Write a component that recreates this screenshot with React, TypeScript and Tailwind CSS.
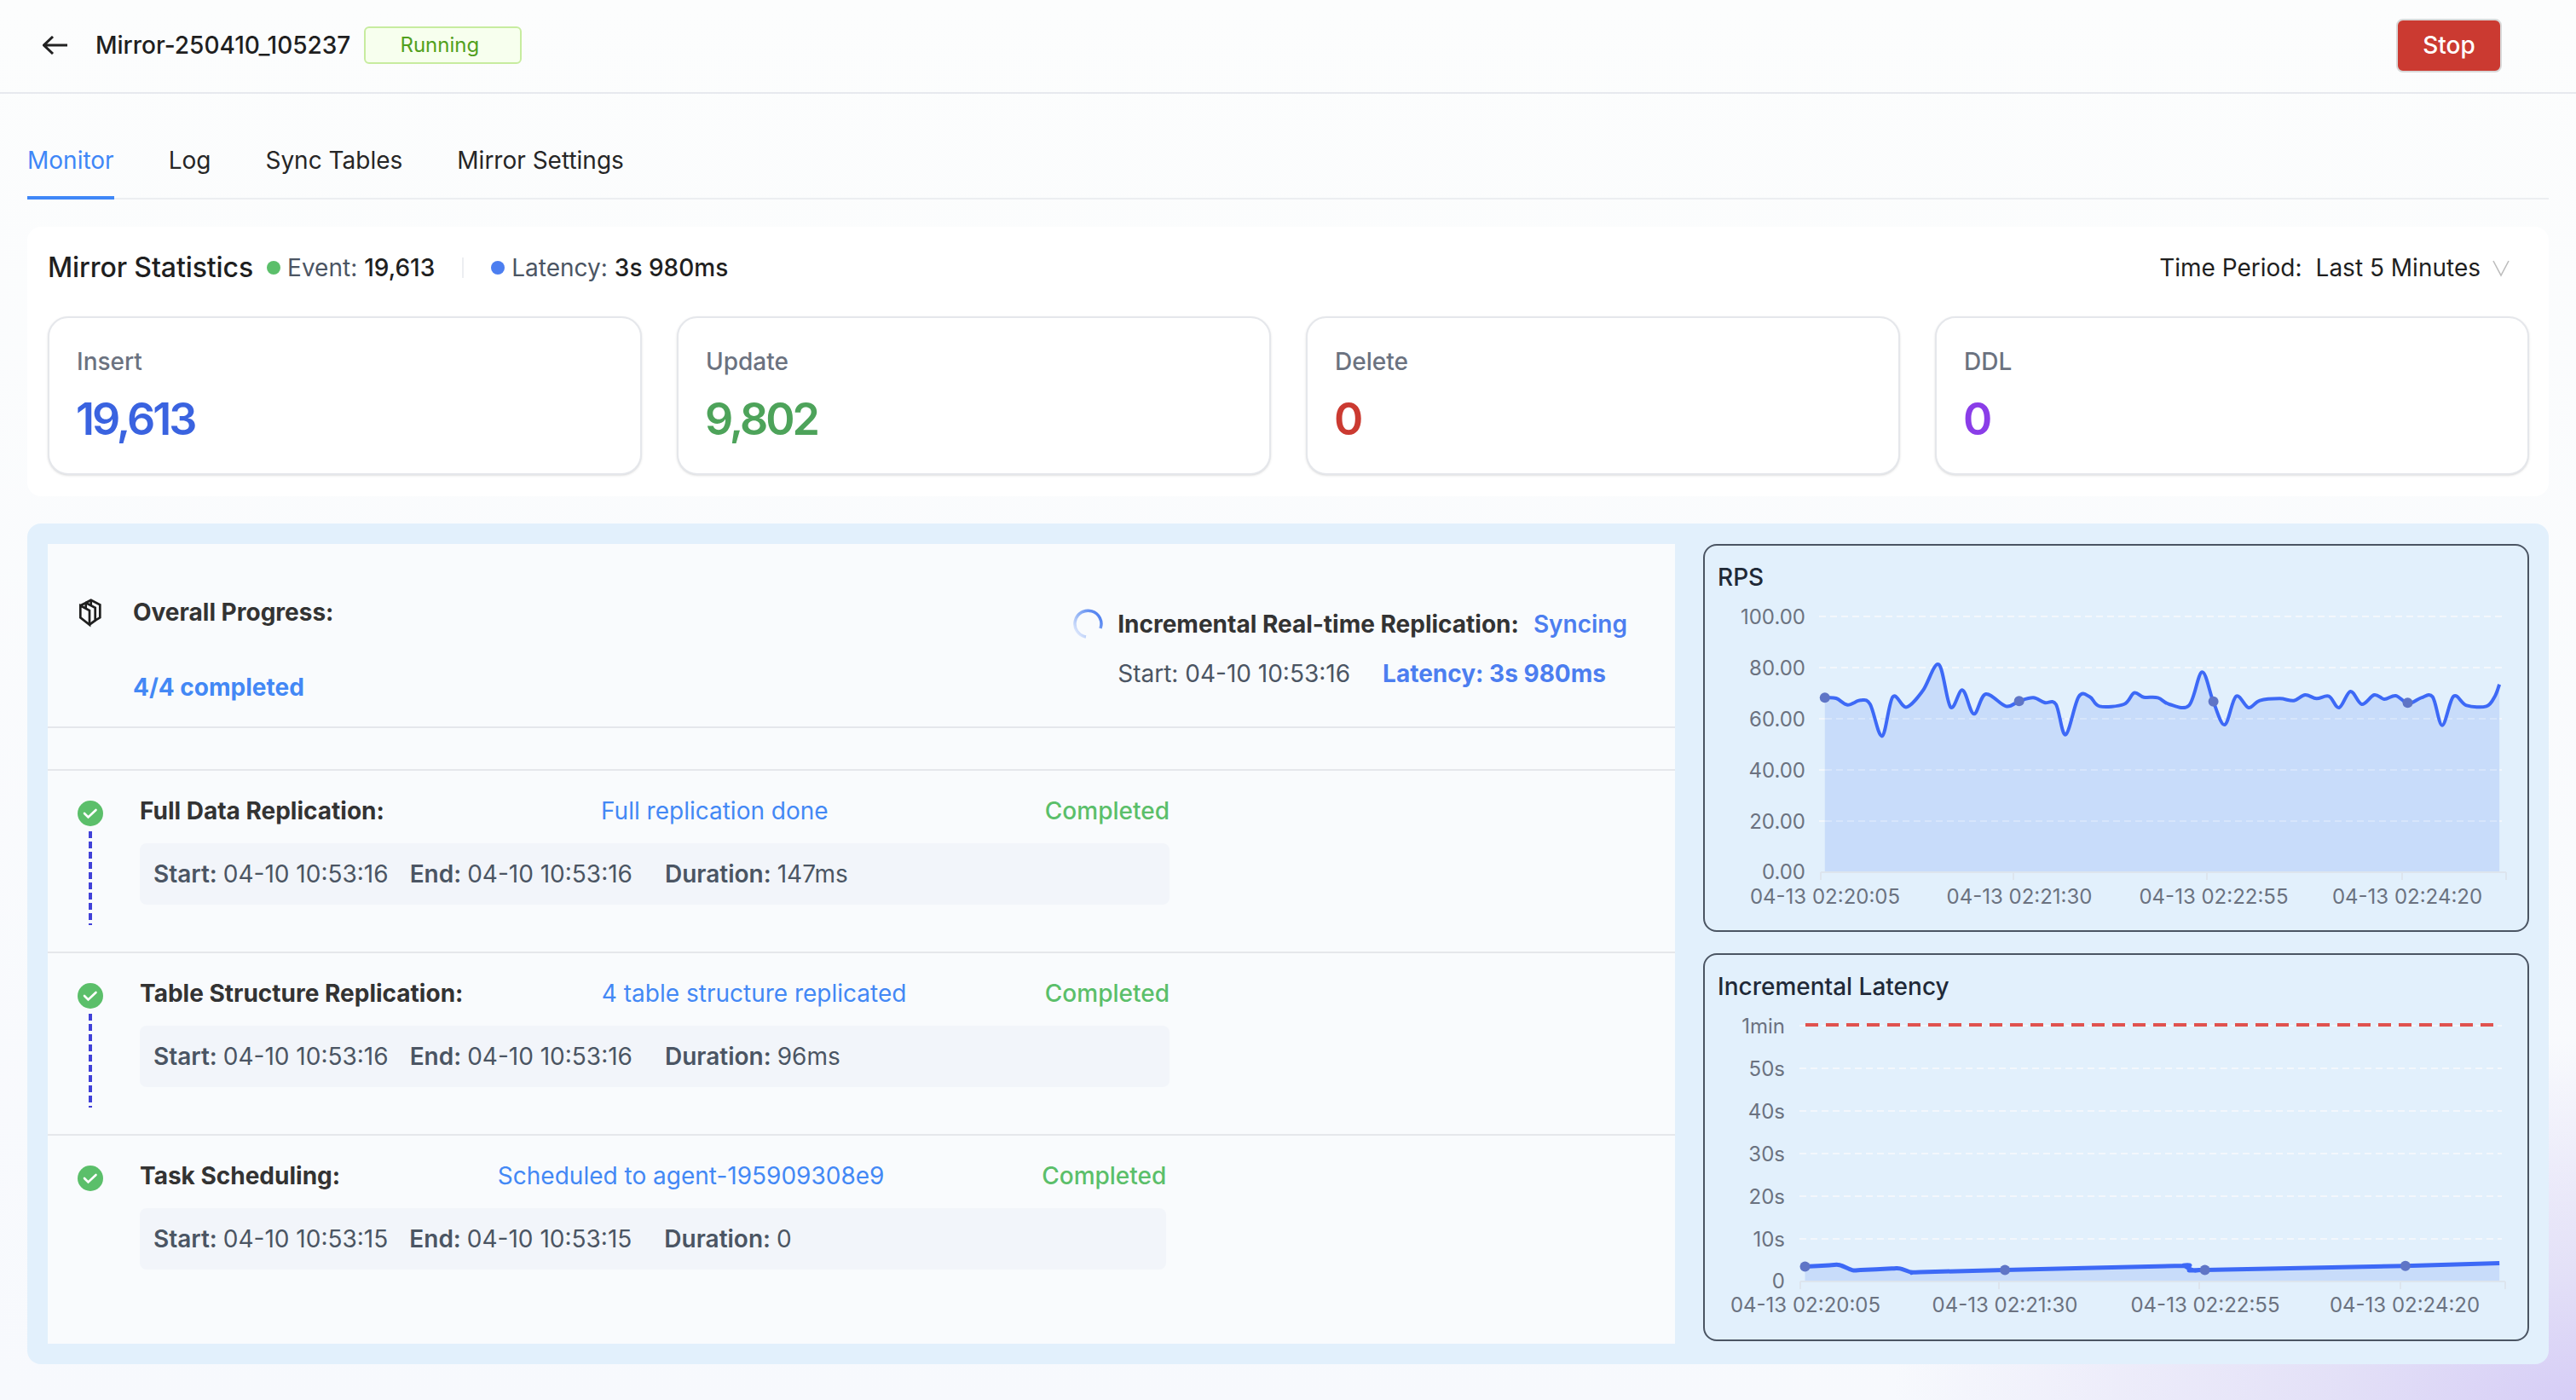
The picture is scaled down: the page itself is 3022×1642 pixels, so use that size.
import React from "react";

const toX = (zx: number) => 1980 + zx / 1.505;

// Catmull-Rom through the sampled points, so the trace stays smooth
const smooth = (pts: number[][]) => {
  let d = `M${pts[0][0]} ${pts[0][1]}`;
  for (let i = 0; i < pts.length - 1; i++) {
    const p0 = pts[Math.max(i - 1, 0)];
    const p1 = pts[i];
    const p2 = pts[i + 1];
    const p3 = pts[Math.min(i + 2, pts.length - 1)];
    const c1x = p1[0] + (p2[0] - p0[0]) / 6;
    const c1y = p1[1] + (p2[1] - p0[1]) / 6;
    const c2x = p2[0] - (p3[0] - p1[0]) / 6;
    const c2y = p2[1] - (p3[1] - p1[1]) / 6;
    d += ` C${c1x} ${c1y} ${c2x} ${c2y} ${p2[0]} ${p2[1]}`;
  }
  return d;
};

const rpsRaw = [
  [242, 595], [262, 597], [282, 620], [305, 604], [322, 618], [343, 730], [362, 592], [386, 628], [415, 570],
  [443, 478], [464, 628], [485, 568], [505, 652], [526, 582], [562, 625], [585, 607], [610, 595], [630, 612],
  [650, 618], [667, 725], [690, 592], [710, 592], [727, 625], [770, 618], [788, 578], [805, 593], [830, 595],
  [850, 618], [885, 622], [908, 505], [928, 610], [948, 690], [968, 590], [990, 630], [1010, 605], [1045, 598],
  [1070, 605], [1090, 585], [1110, 598], [1132, 590], [1150, 630], [1170, 573], [1190, 618], [1212, 585],
  [1230, 600], [1250, 588], [1272, 615], [1295, 595], [1315, 592], [1332, 692], [1352, 590], [1375, 622],
  [1410, 625], [1425, 590], [1433, 548],
];
const rpsPts = rpsRaw.map(([x, y]) => [toX(x), 620 + y / 3]);
const rpsDots = [[242, 595], [585, 607], [928, 608], [1271, 613]].map(([x, y]) => [toX(x), 620 + y / 3]);

const latRaw = [
  [207, 1115], [250, 1111], [268, 1110], [290, 1127], [305, 1127], [360, 1122], [375, 1122], [395, 1135], [410, 1134],
  [560, 1127], [860, 1113], [875, 1112], [892, 1128], [905, 1127], [913, 1127], [1266, 1113], [1433, 1104],
];
const latPts = latRaw.map(([x, y]) => [toX(x), 1100 + y / 2.893]);
const latDots = [[207, 1115], [560, 1127], [913, 1127], [1267, 1113]].map(([x, y]) => [toX(x), 1100 + y / 2.893]);

const axisText = "font-['Inter'] text-[24px] fill-[#6b7280]";

const RpsChart = () => {
  const line = smooth(rpsPts);
  const ys = [
    ["100.00", 723],
    ["80.00", 783],
    ["60.00", 843],
    ["40.00", 903],
    ["20.00", 963],
    ["0.00", 1022],
  ] as const;
  return (
    <svg viewBox="2000 697 965 394" className="block w-[965px] h-[394px]">
      {ys.slice(0, 5).map(([, y]) => (
        <line key={y} x1="2134" x2="2935" y1={y} y2={y} stroke="#f3f7fc" strokeWidth="2" strokeDasharray="8 5" />
      ))}
      <path d={`${line} L${toX(1433)} 1022 L${toX(242)} 1022 Z`} fill="#c8dcfa" />
      {ys.slice(2, 5).map(([, y]) => (
        <line key={y} x1="2141" x2="2932" y1={y} y2={y} stroke="#d7e5fb" strokeWidth="2" strokeDasharray="8 5" />
      ))}
      <line x1="2136" x2="2940" y1="1023" y2="1023" stroke="#dde5ee" strokeWidth="2" />
      {[2136, 2362, 2589, 2818, 2940].map((x) => (
        <line key={x} x1={x} x2={x} y1="1023" y2="1032" stroke="#dde5ee" strokeWidth="2" />
      ))}
      <path d={line} fill="none" stroke="#3d69f6" strokeWidth="4" />
      {rpsDots.map(([x, y]) => (
        <circle key={x} cx={x} cy={y} r="6" fill="#5f75c6" />
      ))}
      {ys.map(([t, y]) => (
        <text key={t} x="2118" y={y + 9} textAnchor="end" className={axisText}>
          {t}
        </text>
      ))}
      {[
        ["04-13 02:20:05", 2141],
        ["04-13 02:21:30", 2369],
        ["04-13 02:22:55", 2597],
        ["04-13 02:24:20", 2824],
      ].map(([t, x]) => (
        <text key={t} x={x} y="1060" textAnchor="middle" className={axisText}>
          {t}
        </text>
      ))}
    </svg>
  );
};

const LatencyChart = () => {
  const line = smooth(latPts);
  const ys = [
    ["1min", 1203],
    ["50s", 1253],
    ["40s", 1303],
    ["30s", 1353],
    ["20s", 1403],
    ["10s", 1453],
    ["0", 1502],
  ] as const;
  return (
    <svg viewBox="2000 1177 965 394" className="block w-[965px] h-[394px]">
      {ys.slice(0, 6).map(([, y]) => (
        <line key={y} x1="2111" x2="2935" y1={y} y2={y} stroke="#f3f7fc" strokeWidth="2" strokeDasharray="8 5" />
      ))}
      <line x1="2118" x2="2927" y1="1202" y2="1202" stroke="#e0524f" strokeWidth="4" strokeDasharray="15 9" />
      <path d={`${line} L${toX(1433)} 1502 L${toX(207)} 1502 Z`} fill="#c8dcfa" />
      <line x1="2112" x2="2939" y1="1503" y2="1503" stroke="#dde5ee" strokeWidth="2" />
      {[2112, 2345, 2580, 2816, 2939].map((x) => (
        <line key={x} x1={x} x2={x} y1="1503" y2="1512" stroke="#dde5ee" strokeWidth="2" />
      ))}
      <path d={line} fill="none" stroke="#3d69f6" strokeWidth="5" />
      {latDots.map(([x, y]) => (
        <circle key={x} cx={x} cy={y} r="6" fill="#5f75c6" />
      ))}
      {ys.map(([t, y]) => (
        <text key={t} x="2094" y={y + 9} textAnchor="end" className={axisText}>
          {t}
        </text>
      ))}
      {[
        ["04-13 02:20:05", 2118],
        ["04-13 02:21:30", 2352],
        ["04-13 02:22:55", 2587],
        ["04-13 02:24:20", 2821],
      ].map(([t, x]) => (
        <text key={t} x={x} y="1539" textAnchor="middle" className={axisText}>
          {t}
        </text>
      ))}
    </svg>
  );
};

const ChartCard = ({ title, children }: { title: string; children: React.ReactNode }) => (
  <div className="h-[455px] w-[969px] rounded-[16px] border-2 border-[#4b5563] pt-[17px]">
    <div className="pl-[15px] text-[28px] leading-[40px] font-medium text-[#1f2937]">{title}</div>
    {children}
  </div>
);

const StatCard = ({ label, value, color }: { label: string; value: string; color: string }) => (
  <div className="h-[186px] flex-1 rounded-[24px] border-2 border-[#e5e7eb] bg-white pl-[32px] pt-[31px] shadow-sm">
    <div className="text-[28px] leading-[40px] font-medium text-[#6b7280]">{label}</div>
    <div className={`mt-[18px] text-[52px] leading-[60px] font-semibold tracking-[-3px] ${color} ${value.length > 1 ? "ml-[-1px]" : "ml-[-1px]"}`}>
      {value}
    </div>
  </div>
);

const CheckDot = () => (
  <svg viewBox="0 0 30 30" className="w-[30px] h-[30px] shrink-0">
    <circle cx="15" cy="15" r="15" fill="#5bbf6a" />
    <path d="M8 15 L12.5 19.5 L21.5 11" fill="none" stroke="#fff" strokeWidth="2.6" strokeLinecap="round" />
  </svg>
);

type Step = {
  name: string;
  note: string;
  start: string;
  end: string;
  duration: string;
  line: boolean;
  last?: boolean;
};

const steps: Step[] = [
  { name: "Full Data Replication:", note: "Full replication done", start: "04-10 10:53:16", end: "04-10 10:53:16", duration: "147ms", line: true },
  { name: "Table Structure Replication:", note: "4 table structure replicated", start: "04-10 10:53:16", end: "04-10 10:53:16", duration: "96ms", line: true },
  { name: "Task Scheduling:", note: "Scheduled to agent-195909308e9", start: "04-10 10:53:15", end: "04-10 10:53:15", duration: "0", line: false, last: true },
];

const StepRow = ({ step }: { step: Step }) => (
  <div className={step.last ? "flex h-[245px] pl-[35px]" : "flex h-[214px] border-b-2 border-[#e5e7eb] pl-[35px]"}>
    <div className="flex w-[30px] flex-col items-center pt-[35px]">
      <CheckDot />
      {step.line && (
        <div className="mt-[6px] h-[110px] w-[4px] bg-[repeating-linear-gradient(to_bottom,#4141d8_0,#4141d8_8px,transparent_8px,transparent_12px)]" />
      )}
    </div>
    <div className="ml-[43px] w-fit pt-[27px]">
      <div className="flex justify-between text-[28px] leading-[40px]">
        <span className="font-bold text-[#333]">{step.name}</span>
        <span className="text-[#4388f5]">{step.note}</span>
        <span className="font-medium text-[#5bbf6a]">Completed</span>
      </div>
      <div className="mt-[18px] flex h-[72px] items-center rounded-[8px] bg-[#f2f5fa] pl-[16px] text-[28px] text-[#4b5563]">
        <span className="mr-[25px]">
          <span className="font-semibold">Start: </span>
          {step.start}
        </span>
        <span className="mr-[38px]">
          <span className="font-semibold">End: </span>
          {step.end}
        </span>
        <span className={step.last ? "w-[589px]" : "w-[592px]"}>
          <span className="font-semibold">Duration: </span>
          {step.duration}
        </span>
      </div>
    </div>
  </div>
);

export default function App() {
  return (
    <div className="min-h-screen w-full bg-[radial-gradient(800px_420px_at_100%_100%,#d6cdf6_0%,#e3e0f7_35%,transparent_100%),linear-gradient(to_bottom,#fcfdfd,#f7f9fd)] bg-no-repeat font-['Inter',sans-serif] pb-[42px]">
      <header className="flex h-[110px] items-center border-b-2 border-[#e7e9ee] pb-[2px] pl-[50px] pr-[87px]">
        <svg viewBox="0 0 30 22" className="h-[22px] w-[30px]">
          <path d="M29 11 H2 M12 1 L1.5 11 L12 21" fill="none" stroke="#222" strokeWidth="3" />
        </svg>
        <span className="ml-[32px] text-[28px] font-medium text-[#1f1f1f]">Mirror-250410_105237</span>
        <span className="ml-[16px] flex h-[44px] w-[185px] items-center justify-center rounded-[6px] border-2 border-[#c7ec9f] bg-[#f7ffee] pr-[8px] text-[24px] text-[#52a01e]">
          Running
        </span>
        <button className="ml-auto h-[63px] w-[124px] rounded-[8px] border-2 border-[#d9d9d9] bg-[#cb3a31] text-[28px] font-medium text-white">
          Stop
        </button>
      </header>

      <div className="mx-[32px] mt-[44px] flex h-[80px] gap-[64px] border-b-2 border-[#eceef1] text-[28px] leading-[68px] text-[#262626]">
        <span className="h-[80px] border-b-4 border-[#3f87f7] text-[#3f87f7]">Monitor</span>
        <span>Log</span>
        <span>Sync Tables</span>
        <span>Mirror Settings</span>
      </div>

      <section className="mx-[32px] mt-[32px] h-[316px] rounded-[16px] bg-white pl-[24px] pr-[23px] pt-[28px]">
        <div className="flex h-[40px] items-center text-[28px]">
          <span className="text-[32px] font-medium tracking-[-0.1px] text-[#1f1f1f]">Mirror Statistics</span>
          <span className="ml-[16px] h-[16px] w-[16px] rounded-full bg-[#5bbf6a]" />
          <span className="ml-[8px] text-[#4b5563]">Event: </span>
          <span className="ml-[8px] font-medium text-[#1f1f1f]">19,613</span>
          <span className="ml-[32px] h-[24px] w-[2px] bg-[#eceef1]" />
          <span className="ml-[32px] h-[16px] w-[16px] rounded-full bg-[#4c7ef0]" />
          <span className="ml-[8px] text-[#4b5563]">Latency: </span>
          <span className="ml-[8px] font-medium text-[#1f1f1f]">3s 980ms</span>
          <span className="ml-auto text-[#1f1f1f]">Time Period:</span>
          <span className="ml-[16px] text-[#1f1f1f]">Last 5 Minutes</span>
          <svg viewBox="0 0 20 24" className="ml-[14px] mr-[23px] h-[24px] w-[20px]">
            <path d="M1 4 L10 21 L19 4" fill="none" stroke="#bdbdbd" strokeWidth="1.6" />
          </svg>
        </div>
        <div className="mt-[37px] flex gap-[41px]">
          <StatCard label="Insert" value="19,613" color="text-[#3a63e0]" />
          <StatCard label="Update" value="9,802" color="text-[#4da35a]" />
          <StatCard label="Delete" value="0" color="text-[#cb3a31]" />
          <StatCard label="DDL" value="0" color="text-[#8a3de8]" />
        </div>
      </section>

      <section className="mx-[32px] mt-[32px] flex h-[986px] gap-[33px] rounded-[16px] bg-[#e2f0fc] pl-[24px] pt-[24px]">
        <div className="h-[938px] w-[1909px] bg-[#f9fbfd]">
          <div className="flex h-[216px] border-b-2 border-[#e5e7eb]">
            <div className="flex flex-col pl-[32px]">
              <div className="mt-[59px] flex h-[42px] items-center">
                <svg viewBox="0 0 36 42" className="h-[42px] w-[36px]">
                  <g fill="none" stroke="#1f1f1f" strokeWidth="2.7">
                    <path d="M6.3 13.3 L17 19 V35.7 L6.3 27.3 Z" />
                    <path d="M6.3 13.3 L12.7 10 L23.7 15.7 V30.7 L17 35.7" />
                    <path d="M12.7 10 V16.5" />
                    <path d="M12.7 10 L18.7 6.7 L29.3 12.3 V27.3 L23.7 30.7" />
                    <path d="M18.7 6.7 V13" />
                  </g>
                </svg>
                <span className="ml-[32px] text-[28px] font-bold text-[#333]">Overall Progress:</span>
              </div>
              <span className="ml-[68px] mt-[46px] text-[28px] font-bold text-[#4388f5]">4/4 completed</span>
            </div>
            <div className="ml-auto mr-[56px] pt-[74px]">
              <div className="flex h-[40px] items-center">
                <svg viewBox="0 0 36 36" className="ml-[-53px] mr-[17px] h-[36px] w-[36px]">
                  <defs>
                    <linearGradient id="spin" x1="0" y1="1" x2="1" y2="0.2">
                      <stop offset="0" stopColor="#f0f4fe" />
                      <stop offset="0.45" stopColor="#9cbaf6" />
                      <stop offset="1" stopColor="#4c7ef0" />
                    </linearGradient>
                  </defs>
                  <path d="M33 23 A15.5 15.5 0 1 0 16 33" fill="none" stroke="url(#spin)" strokeWidth="3.5" />
                </svg>
                <span className="text-[28px] font-bold text-[#333]">Incremental Real-time Replication:</span>
                <span className="ml-[17px] text-[28px] font-semibold text-[#4c7ef0]">Syncing</span>
              </div>
              <div className="mt-[18px] flex h-[40px] items-center text-[28px]">
                <span className="text-[#4b5563]">Start: 04-10 10:53:16</span>
                <span className="ml-[38px] font-bold text-[#4c7ef0]">Latency: 3s 980ms</span>
              </div>
            </div>
          </div>
          <div className="h-[50px] border-b-2 border-[#e5e7eb]" />
          {steps.map((s) => (
            <StepRow key={s.name} step={s} />
          ))}
        </div>
        <div className="flex flex-col gap-[25px]">
          <ChartCard title="RPS">
            <RpsChart />
          </ChartCard>
          <ChartCard title="Incremental Latency">
            <LatencyChart />
          </ChartCard>
        </div>
      </section>
    </div>
  );
}
